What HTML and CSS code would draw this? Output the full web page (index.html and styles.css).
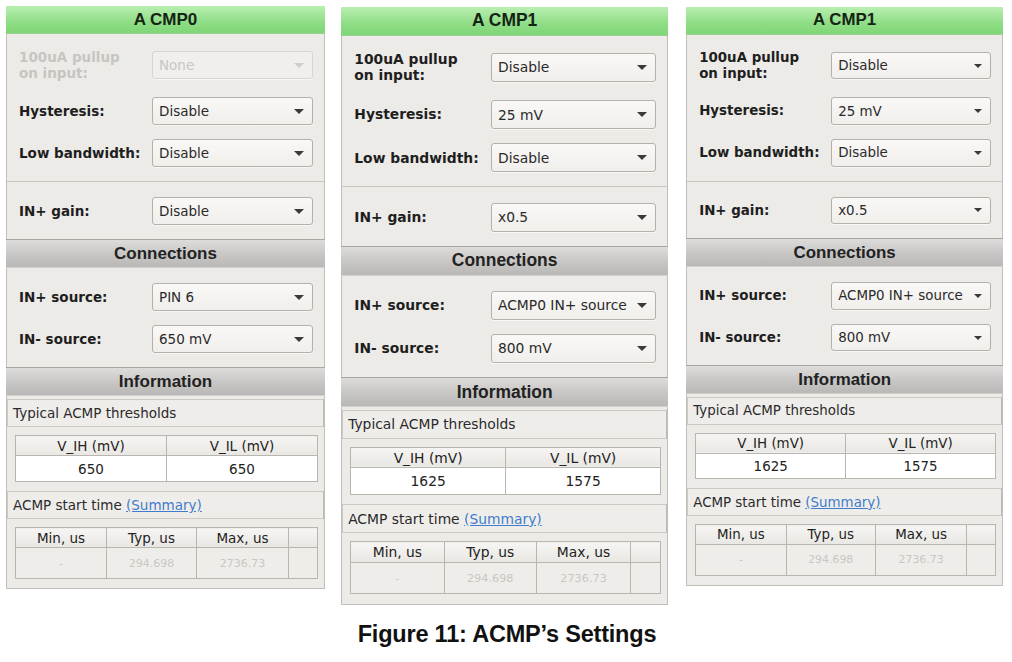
FILE: index.html
```html
<!DOCTYPE html>
<html lang="en">
<head>
<meta charset="utf-8">
<title>ACMP's Settings</title>
<link rel="stylesheet" href="styles.css">
</head>
<body>
<main class="figure">
  <div class="panels">
    <section class="panel p0">
      <header class="panel-title">A CMP0</header>
      <div class="group group-first">
        <div class="row row-tall is-disabled">
          <span class="label">100uA pullup<br>on input:</span>
          <div class="select"><span class="value">None</span><i class="caret"></i></div>
        </div>
        <div class="row">
          <span class="label">Hysteresis:</span>
          <div class="select"><span class="value">Disable</span><i class="caret"></i></div>
        </div>
        <div class="row">
          <span class="label">Low bandwidth:</span>
          <div class="select"><span class="value">Disable</span><i class="caret"></i></div>
        </div>
      </div>
      <div class="group">
        <div class="row">
          <span class="label">IN+ gain:</span>
          <div class="select"><span class="value">Disable</span><i class="caret"></i></div>
        </div>
      </div>
      <div class="section-title">Connections</div>
      <div class="group">
        <div class="row">
          <span class="label">IN+ source:</span>
          <div class="select"><span class="value">PIN 6</span><i class="caret"></i></div>
        </div>
        <div class="row">
          <span class="label">IN- source:</span>
          <div class="select"><span class="value">650 mV</span><i class="caret"></i></div>
        </div>
      </div>
      <div class="section-title">Information</div>
      <div class="info">
        <div class="subbox">Typical ACMP thresholds</div>
        <table class="grid thresholds">
          <tr><th>V_IH (mV)</th><th>V_IL (mV)</th></tr>
          <tr><td>650</td><td>650</td></tr>
        </table>
        <div class="subbox">ACMP start time <a class="link" href="#">(Summary)</a></div>
        <table class="grid timing">
          <tr><th class="c1">Min, us</th><th class="c2">Typ, us</th><th class="c3">Max, us</th><th class="c4"></th></tr>
          <tr><td>-</td><td>294.698</td><td>2736.73</td><td></td></tr>
        </table>
      </div>
    </section>

    <section class="panel p1">
      <header class="panel-title">A CMP1</header>
      <div class="group group-first">
        <div class="row row-tall">
          <span class="label">100uA pullup<br>on input:</span>
          <div class="select"><span class="value">Disable</span><i class="caret"></i></div>
        </div>
        <div class="row">
          <span class="label">Hysteresis:</span>
          <div class="select"><span class="value">25 mV</span><i class="caret"></i></div>
        </div>
        <div class="row">
          <span class="label">Low bandwidth:</span>
          <div class="select"><span class="value">Disable</span><i class="caret"></i></div>
        </div>
      </div>
      <div class="group">
        <div class="row">
          <span class="label">IN+ gain:</span>
          <div class="select"><span class="value">x0.5</span><i class="caret"></i></div>
        </div>
      </div>
      <div class="section-title">Connections</div>
      <div class="group">
        <div class="row">
          <span class="label">IN+ source:</span>
          <div class="select"><span class="value">ACMP0 IN+ source</span><i class="caret"></i></div>
        </div>
        <div class="row">
          <span class="label">IN- source:</span>
          <div class="select"><span class="value">800 mV</span><i class="caret"></i></div>
        </div>
      </div>
      <div class="section-title">Information</div>
      <div class="info">
        <div class="subbox">Typical ACMP thresholds</div>
        <table class="grid thresholds">
          <tr><th>V_IH (mV)</th><th>V_IL (mV)</th></tr>
          <tr><td>1625</td><td>1575</td></tr>
        </table>
        <div class="subbox">ACMP start time <a class="link" href="#">(Summary)</a></div>
        <table class="grid timing">
          <tr><th class="c1">Min, us</th><th class="c2">Typ, us</th><th class="c3">Max, us</th><th class="c4"></th></tr>
          <tr><td>-</td><td>294.698</td><td>2736.73</td><td></td></tr>
        </table>
      </div>
    </section>

    <section class="panel p2">
      <header class="panel-title">A CMP1</header>
      <div class="group group-first">
        <div class="row row-tall">
          <span class="label">100uA pullup<br>on input:</span>
          <div class="select"><span class="value">Disable</span><i class="caret"></i></div>
        </div>
        <div class="row">
          <span class="label">Hysteresis:</span>
          <div class="select"><span class="value">25 mV</span><i class="caret"></i></div>
        </div>
        <div class="row">
          <span class="label">Low bandwidth:</span>
          <div class="select"><span class="value">Disable</span><i class="caret"></i></div>
        </div>
      </div>
      <div class="group">
        <div class="row">
          <span class="label">IN+ gain:</span>
          <div class="select"><span class="value">x0.5</span><i class="caret"></i></div>
        </div>
      </div>
      <div class="section-title">Connections</div>
      <div class="group">
        <div class="row">
          <span class="label">IN+ source:</span>
          <div class="select"><span class="value">ACMP0 IN+ source</span><i class="caret"></i></div>
        </div>
        <div class="row">
          <span class="label">IN- source:</span>
          <div class="select"><span class="value">800 mV</span><i class="caret"></i></div>
        </div>
      </div>
      <div class="section-title">Information</div>
      <div class="info">
        <div class="subbox">Typical ACMP thresholds</div>
        <table class="grid thresholds">
          <tr><th>V_IH (mV)</th><th>V_IL (mV)</th></tr>
          <tr><td>1625</td><td>1575</td></tr>
        </table>
        <div class="subbox">ACMP start time <a class="link" href="#">(Summary)</a></div>
        <table class="grid timing">
          <tr><th class="c1">Min, us</th><th class="c2">Typ, us</th><th class="c3">Max, us</th><th class="c4"></th></tr>
          <tr><td>-</td><td>294.698</td><td>2736.73</td><td></td></tr>
        </table>
      </div>
    </section>
  </div>
  <p class="caption">Figure 11: ACMP’s Settings</p>
</main>
</body>
</html>
```

FILE: styles.css
```css
html, body {
  margin: 0;
  padding: 0;
  background: #ffffff;
}

body {
  font-family: "DejaVu Sans", "Liberation Sans", sans-serif;
  color: #1f1f1f;
}

.figure {
  width: 1012px;
  height: 662px;
  overflow: hidden;
}

.panels {
  display: flex;
  align-items: flex-start;
  padding-left: 6px;
  height: 604px;
}

.panel {
  width: 319px;
  box-sizing: border-box;
  background: #edebe8;
  border: 1px solid #c3bfb8;
  border-top: none;
  font-size: 13.5px;
}

.p0 { margin-top: 6px; }
.p1 { zoom: 1.026; margin-top: 6.8px; margin-left: 15.6px; }
.p2 { zoom: 0.993; margin-top: 7px; margin-left: 18.1px; }

.panel-title {
  height: 28px;
  box-sizing: border-box;
  margin: 0 -1px;
  background: linear-gradient(#b9efb1, #8fdd86 60%, #7fd676);
  border-bottom: 1px solid #9fcf98;
  font-family: "Liberation Sans", Arial, sans-serif;
  font-weight: bold;
  font-size: 17px;
  color: #142414;
  display: flex;
  align-items: center;
  justify-content: center;
}

.group {
  display: flex;
  flex-direction: column;
  gap: 14px;
  padding: 15px 11px 14px 12px;
}

.group-first {
  border-bottom: 1px solid #cbc7c0;
}

.row {
  display: grid;
  grid-template-columns: 1fr 161px;
  align-items: center;
  min-height: 28px;
}

.row-tall {
  min-height: 32px;
  margin-bottom: 2px;
}

.label {
  font-weight: bold;
  line-height: 16px;
  color: #1e1e1e;
  white-space: nowrap;
}

.select {
  height: 28px;
  box-sizing: border-box;
  border: 1px solid #b5b0a9;
  border-radius: 3px;
  background: linear-gradient(#f9f8f6, #f1efec);
  box-shadow: 0 1px 0 rgba(255,255,255,0.6);
  display: flex;
  align-items: center;
  padding: 0 8px 0 6px;
  color: #2a2a2a;
}

.value {
  flex: 1;
  white-space: nowrap;
  overflow: hidden;
}

.caret {
  width: 0;
  height: 0;
  border-left: 5px solid transparent;
  border-right: 5px solid transparent;
  border-top: 5px solid #3a3a3a;
  margin-left: 4px;
}

.is-disabled .label { color: #c7c5c1; }
.is-disabled .select {
  border-color: #d8d4ce;
  background: #f0efed;
  color: #c8c6c2;
}
.is-disabled .caret { border-top-color: #d0cecb; }

.section-title {
  height: 29px;
  box-sizing: border-box;
  margin: 0 -1px;
  border-top: 1px solid #a9a6a1;
  border-bottom: 1px solid #d2d0cc;
  background: linear-gradient(#dddcda, #c9c8c6 50%, #b9b8b6);
  font-family: "Liberation Sans", Arial, sans-serif;
  font-weight: bold;
  font-size: 17px;
  color: #222;
  display: flex;
  align-items: center;
  justify-content: center;
}

.info {
  padding: 3px 0 0 0;
}

.subbox {
  height: 28px;
  box-sizing: border-box;
  border: 1px solid #cdc9c2;
  border-right-color: #bdb9b2;
  background: #efedea;
  display: flex;
  align-items: center;
  padding-left: 5px;
  color: #2a2a2a;
  white-space: pre;
}

.link {
  color: #3f7ccd;
  text-decoration: underline;
}

.grid {
  border-collapse: collapse;
  margin: 8px 6px 9px 8px;
  width: 303px;
  table-layout: fixed;
  border: 1px solid #aaa6a0;
}

.grid th,
.grid td {
  border: 1px solid #b9b5af;
  padding: 0;
  text-align: center;
  font-weight: normal;
  color: #222;
}

.grid th {
  height: 19px;
  background: linear-gradient(#f6f5f3, #e9e7e3);
}

.thresholds td {
  height: 25px;
  background: #ffffff;
}

.timing .c1 { width: 90px; }
.timing .c2 { width: 89px; }
.timing .c3 { width: 91px; }

.timing td {
  height: 30px;
  background: #efedea;
  color: #c9c7c3;
  font-size: 11px;
}

.caption {
  margin: 17px 0 0 0;
  text-align: center;
  font-family: "Liberation Sans", Arial, sans-serif;
  font-weight: bold;
  font-size: 23.5px;
  letter-spacing: -0.2px;
  color: #111;
  padding-left: 2px;
}
```
